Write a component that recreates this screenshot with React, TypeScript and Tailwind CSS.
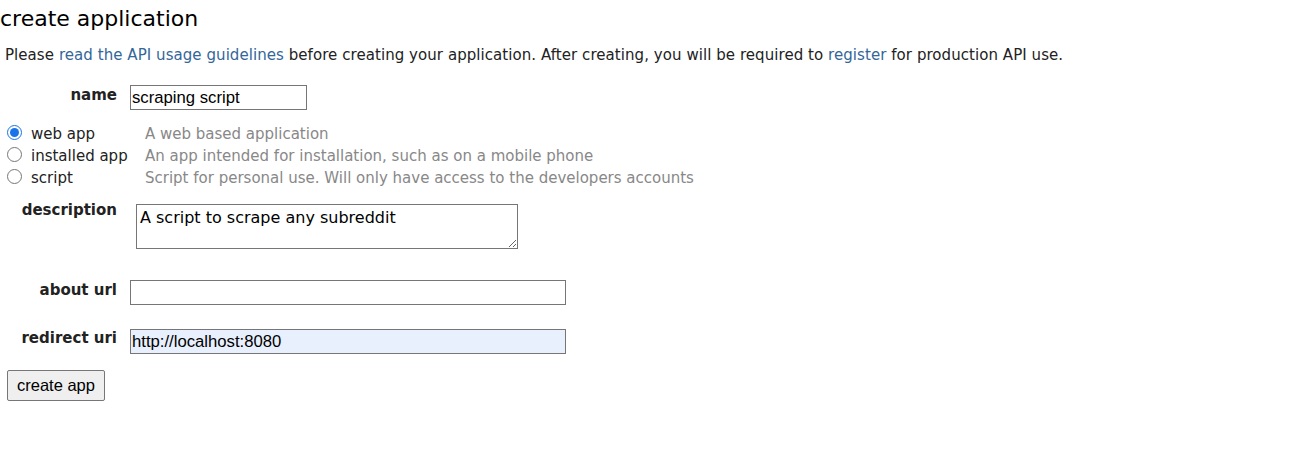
import { useState } from "react";

const appTypes = [
  { value: "web", label: "web app", hint: "A web based application" },
  { value: "installed", label: "installed app", hint: "An app intended for installation, such as on a mobile phone" },
  { value: "script", label: "script", hint: "Script for personal use. Will only have access to the developers accounts" },
];

const verdana = "font-['Verdana','DejaVu_Sans',sans-serif]";
const arial = "font-['Arial','Liberation_Sans',sans-serif]";

export default function App() {
  const [appType, setAppType] = useState("web");

  return (
    <div className={`${verdana} text-[15px] text-[#222] bg-white min-h-screen`}>
      <h1 className="text-[22px] font-normal leading-none pt-[8px] text-black">create application</h1>
      <p className="mt-[16px] pl-[5px] leading-[18px] tracking-[0.004em]">
        Please <a href="#" className="text-[#369]">read the API usage guidelines</a> before creating your
        application. After creating, you will be required to{" "}
        <a href="#" className="text-[#369]">register</a> for production API use.
      </p>

      <form className="mt-[21px]" onSubmit={(e) => e.preventDefault()}>
        <div className="flex items-start">
          <label className="w-[117px] text-right font-bold leading-[18px] pt-[1px]">name</label>
          <input
            defaultValue="scraping script"
            className={`${arial} ml-[13px] w-[177px] h-[25px] border border-[#767676] px-[1px] text-[16.7px] text-black outline-none`}
          />
        </div>

        <div className="mt-[13px] flex flex-col">
          {appTypes.map((t) => (
            <div key={t.value} className="flex items-center h-[22px]">
              <label className="flex items-center w-[145px] cursor-pointer">
                <input
                  type="radio"
                  name="app_type"
                  checked={appType === t.value}
                  onChange={() => setAppType(t.value)}
                  className="ml-[7px] mr-[9px] -mt-[3px] w-[15px] h-[15px] accent-[#1a73e8]"
                />
                {t.label}
              </label>
              <span className="text-[#888]">{t.hint}</span>
            </div>
          ))}
        </div>

        <div className="mt-[15px] flex items-start">
          <label className="w-[117px] text-right font-bold leading-[18px] -mt-[3px]">description</label>
          <textarea
            defaultValue="A script to scrape any subreddit"
            className={`${verdana} ml-[19px] w-[382px] h-[45px] border border-[#767676] px-[3px] pt-[3px] leading-[19px] text-[16px] text-black outline-none`}
          />
        </div>

        <div className="mt-[31px] flex items-start">
          <label className="w-[117px] text-right font-bold leading-[18px] pt-[1px]">about url</label>
          <input
            className={`${arial} ml-[13px] w-[436px] h-[25px] border border-[#767676] px-[1px] text-[16.7px] text-black outline-none`}
          />
        </div>

        <div className="mt-[24px] flex items-start">
          <label className="w-[117px] text-right font-bold leading-[18px]">redirect uri</label>
          <input
            defaultValue="http://localhost:8080"
            className={`${arial} ml-[13px] w-[436px] h-[25px] border border-[#767676] bg-[#e8f0fe] px-[1px] text-[16.7px] text-black outline-none`}
          />
        </div>

        <button
          type="submit"
          className={`${arial} mt-[16px] ml-[7px] w-[98px] h-[31px] border border-[#767676] rounded-[2px] bg-[#efefef] text-[16.5px] text-black`}
        >
          create app
        </button>
      </form>
    </div>
  );
}
